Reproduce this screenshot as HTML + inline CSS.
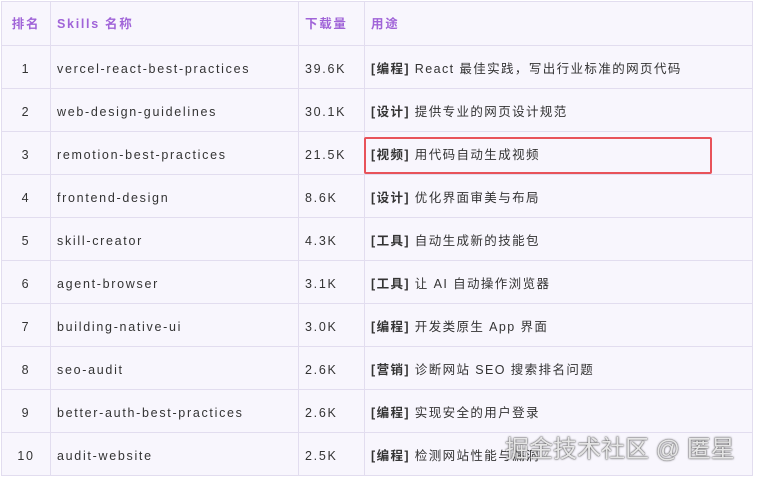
<!DOCTYPE html>
<html><head><meta charset="utf-8"><style>
body{margin:0;width:757px;height:477px;background:#fff;overflow:hidden;font-family:"Liberation Sans","Noto Sans CJK SC",sans-serif;}
table{position:absolute;left:1px;top:1px;border-collapse:collapse;background:#f8f6fd;}
td,th{border:1px solid #e2ddef;height:43px;padding:3px 0 0 6px;box-sizing:border-box;font-size:12.5px;line-height:16px;color:#333;letter-spacing:1.7px;text-align:left;font-weight:normal;vertical-align:middle;}
td:last-child{letter-spacing:1.4px;}
th{color:#a064d8;font-weight:bold;height:44px;padding-top:0;}
td:first-child,th:first-child{text-align:center;padding-left:0;}
b{font-weight:bold;color:#333;}
.box{position:absolute;left:364px;top:137px;width:344px;height:33px;border:2.5px solid #e8535a;border-radius:2px;}
.wm{position:absolute;left:505px;top:429px;font-size:24px;color:rgba(255,255,255,0.85);text-shadow:0 0 2px #555,0 0 1px #333;letter-spacing:0;}
</style></head><body>
<table>
<colgroup><col style="width:49px"><col style="width:248px"><col style="width:66px"><col style="width:388px"></colgroup>
<tr><th>排名</th><th>Skills 名称</th><th>下载量</th><th>用途</th></tr>
<tr><td>1</td><td>vercel-react-best-practices</td><td>39.6K</td><td><b>[编程]</b> React 最佳实践，写出行业标准的网页代码</td></tr>
<tr><td>2</td><td>web-design-guidelines</td><td>30.1K</td><td><b>[设计]</b> 提供专业的网页设计规范</td></tr>
<tr><td>3</td><td>remotion-best-practices</td><td>21.5K</td><td><b>[视频]</b> 用代码自动生成视频</td></tr>
<tr><td>4</td><td>frontend-design</td><td>8.6K</td><td><b>[设计]</b> 优化界面审美与布局</td></tr>
<tr><td>5</td><td>skill-creator</td><td>4.3K</td><td><b>[工具]</b> 自动生成新的技能包</td></tr>
<tr><td>6</td><td>agent-browser</td><td>3.1K</td><td><b>[工具]</b> 让 AI 自动操作浏览器</td></tr>
<tr><td>7</td><td>building-native-ui</td><td>3.0K</td><td><b>[编程]</b> 开发类原生 App 界面</td></tr>
<tr><td>8</td><td>seo-audit</td><td>2.6K</td><td><b>[营销]</b> 诊断网站 SEO 搜索排名问题</td></tr>
<tr><td>9</td><td>better-auth-best-practices</td><td>2.6K</td><td><b>[编程]</b> 实现安全的用户登录</td></tr>
<tr><td>10</td><td>audit-website</td><td>2.5K</td><td><b>[编程]</b> 检测网站性能与漏洞</td></tr>
</table>
<div class="box"></div>
<div class="wm">掘金技术社区 @ 匿星</div>
</body></html>
